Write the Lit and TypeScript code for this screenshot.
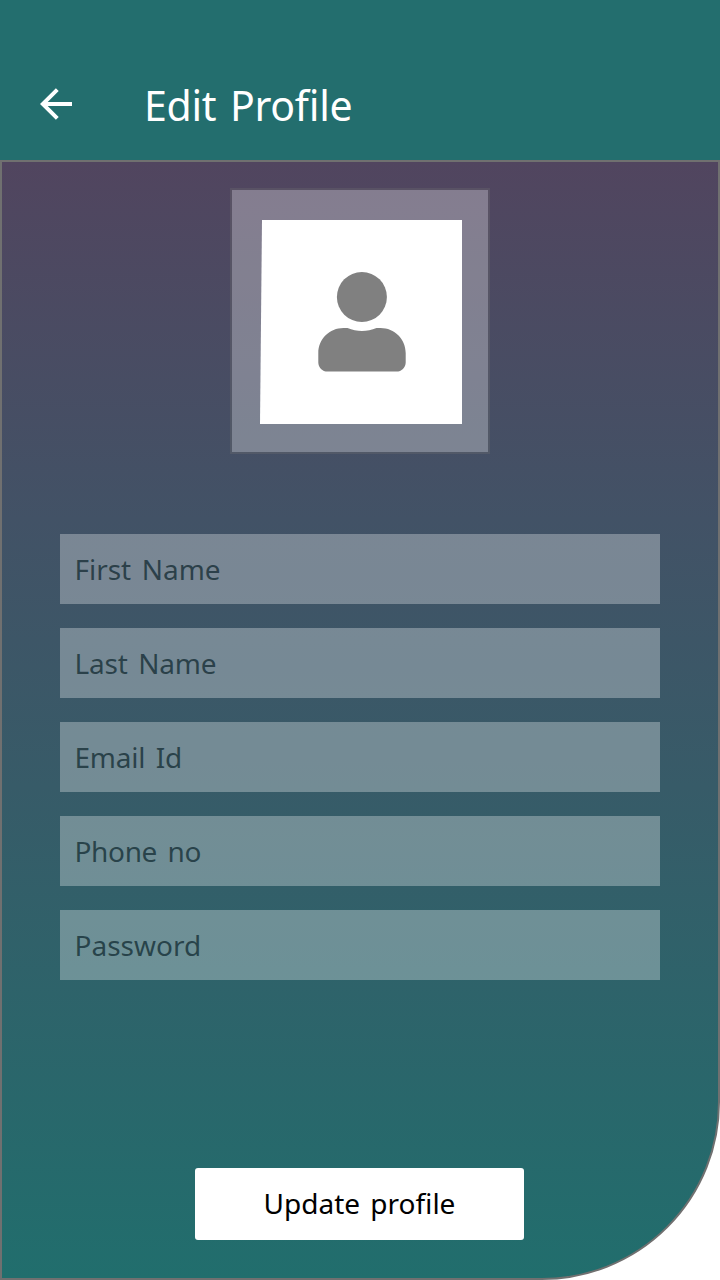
import { LitElement, html, css } from "lit";
import { customElement } from "lit/decorators.js";

@customElement("app-root")
export class AppRoot extends LitElement {
  static styles = css`
    :host {
      display: flex;
      flex-direction: column;
      box-sizing: border-box;
      width: 720px;
      height: 1280px;
      overflow: hidden;
      background: #fff;
      font-family: "Noto Sans", "Open Sans", sans-serif;
    }
    * { box-sizing: border-box; }
    header {
      flex: none;
      height: 160px;
      padding: 76px 0 0 40px;
      display: flex;
      align-items: flex-start;
      background: #236e6e;
      color: #fff;
    }
    .back {
      border: 0;
      padding: 0;
      margin-top: 11px;
      width: 32px;
      height: 34px;
      background: none;
    }
    svg { display: block; }
    h1 {
      margin: 0 0 0 72px;
      font-size: 41px;
      line-height: 58px;
      font-weight: 400;
      letter-spacing: -0.3px;
      word-spacing: 3.5px;
      font-feature-settings: "liga" 1;
      white-space: nowrap;
    }
    main {
      flex: 1;
      display: flex;
      flex-direction: column;
      align-items: center;
      border: 2px solid #707070;
      padding-top: 26px;
      border-bottom-right-radius: 178px;
      background: linear-gradient(#51455f, #425266 32%, #375b68 56%, #216e6d);
    }
    .avatar {
      width: 260px;
      height: 266px;
      padding: 30px 0 0 28px;
      border: 2px solid rgba(112, 112, 112, 0.3);
      background: rgba(255, 255, 255, 0.3);
      background-clip: padding-box;
    }
    form {
      display: flex;
      flex-direction: column;
      gap: 24px;
      margin-top: 80px;
      width: 600px;
    }
    input {
      display: block;
      width: 600px;
      height: 70px;
      margin: 0;
      padding: 0 14px 1px;
      border: 0;
      border-radius: 0;
      outline: 0;
      background: rgba(255, 255, 255, 0.3);
      font: 400 28px "Noto Sans", "Open Sans", sans-serif;
      word-spacing: 3.5px;
      text-indent: 0.5px;
      color: rgba(0, 0, 0, 0.55);
    }
    input::placeholder { color: rgba(4, 28, 36, 0.68); opacity: 1; }
    .update {
      width: 329px;
      height: 72px;
      margin: 188px 1px 0 0;
      padding: 0 0 2px;
      border: 0;
      border-radius: 3px;
      background: #fff;
      color: #000;
      font: 400 28px "Noto Sans", "Open Sans", sans-serif;
      word-spacing: 3px;
    }
  `;

  private fields = [
    { label: "First Name", spacing: -0.05 },
    { label: "Last Name", spacing: -0.2 },
    { label: "Email Id", spacing: -0.25 },
    { label: "Phone no", spacing: -0.35 },
    { label: "Password", spacing: 0 },
  ];

  render() {
    return html`
      <header>
        <button class="back" aria-label="Back">
          <svg width="32" height="34" viewBox="0 0 32 34" fill="none" stroke="#fff">
            <path d="M32 17H3" stroke-width="4" />
            <path d="M17.300 2.600 2.800 17 17.300 31.400" stroke-width="4" />
          </svg>
        </button>
        <h1>Edit Profile</h1>
      </header>
      <main>
        <div class="avatar">
          <svg width="202" height="204" viewBox="0 0 202 204">
            <path d="M2 0H202V204H0Z" fill="#fff" />
            <circle cx="101.900" cy="77" r="25" fill="#808080" />
            <path
              d="M58.300 133C58.300 119 69.500 108 83.500 108H87.500C97 112 107 112 116.500 108H120.500C134.500 108 145.700 119 145.700 133V142.500C145.700 147.500 141.500 151.600 136.500 151.600H67.500C62.500 151.600 58.300 147.500 58.300 142.500Z"
              fill="#808080"
            />
          </svg>
        </div>
        <form>
          ${this.fields.map(
            (f) => html`<input type="text" placeholder=${f.label} style="letter-spacing:${f.spacing}px" />`
          )}
        </form>
        <button class="update">Update profile</button>
      </main>
    `;
  }
}
